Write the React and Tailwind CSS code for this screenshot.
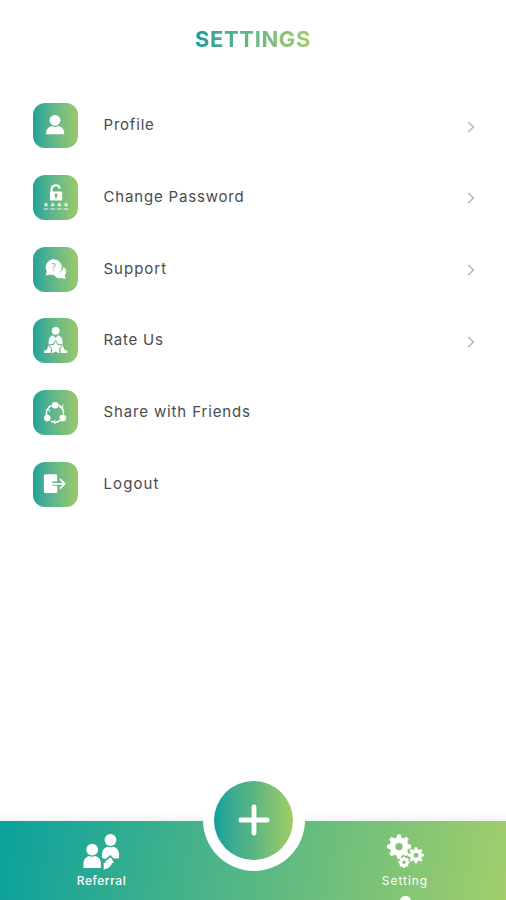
import React from "react";

const gearPath = (cx, cy, outer, inner, teeth, hole) => {
  const points = [];
  const step = (Math.PI * 2) / teeth;
  for (let i = 0; i < teeth; i++) {
    const a = i * step - Math.PI / 2;
    [[-0.34, inner], [-0.18, outer], [0.18, outer], [0.34, inner]].forEach(([f, r]) => {
      points.push(`${(cx + r * Math.cos(a + f * step)).toFixed(2)} ${(cy + r * Math.sin(a + f * step)).toFixed(2)}`);
    });
  }
  return `M${points.join("L")}ZM${cx - hole} ${cy}a${hole} ${hole} 0 1 0 ${hole * 2} 0a${hole} ${hole} 0 1 0 ${-hole * 2} 0Z`;
};

const ProfileIcon = () => (
  <>
    <circle cx="22" cy="17.3" r="5.4" />
    <path d="M13.2 31.2v-1.4c0-4 3.2-6.2 6-6.7 1.8 1.2 4.2 1.2 6 0 2.8.5 6 2.7 6 6.7v1.4Z" />
  </>
);

const PasswordIcon = () => (
  <>
    <path d="M18.6 17v-2.5a4.2 4.2 0 0 1 8-1.8" fill="none" stroke="white" strokeWidth="2.1" strokeLinecap="round" />
    <path fillRule="evenodd" d="M18 16.5h10.2a1 1 0 0 1 1 1v7a1 1 0 0 1-1 1H18a1 1 0 0 1-1-1v-7a1 1 0 0 1 1-1Zm5 2a1.5 1.5 0 0 0-.7 2.8v2.2h1.5v-2.2a1.5 1.5 0 0 0-.8-2.8Z" />
    {[13, 19.7, 26.4, 33.1].map((x) => (
      <g key={x} opacity="0.75">
        <path d={`M${x} 27.8v3.8M${x - 1.7} 28.7l3.4 2M${x + 1.7} 28.7l-3.4 2`} stroke="white" strokeWidth="1.2" />
        <path d={`M${x - 2.4} 34h4.8`} stroke="white" strokeWidth="1.2" />
      </g>
    ))}
  </>
);

const SupportIcon = () => (
  <>
    <path d="M30.3 20.1c2.1 1.2 3.2 3.2 2.7 5.6-.2.9-.6 1.7-1.2 2.5l.7 4.1-3.8-1.3c-3.4.7-6.4-.5-7.6-2.9 4.7-.7 8.4-3.2 9.2-8Z" />
    <path d="M20.5 12.3a8 8 0 1 1-2.9 15.3L12.8 28.5l1-4.2a8 8 0 0 1 6.7-12Z" />
    <text x="20.5" y="23.5" textAnchor="middle" fontSize="10" fontWeight="600" fill="#7cc9a8" fontFamily="Open Sans, sans-serif">?</text>
  </>
);

const RateIcon = () => (
  <>
    <circle cx="22.7" cy="12.8" r="3.9" />
    <path d="M20.1 17.2 22.6 20l2.5-2.8c2.7.7 4.1 2.7 4.3 5.8l.2 3.4-4.4-.6-2.6-4.1-2.6 4.1-4.4.6.1-3.4c.2-3.1 1.8-5.1 4.4-5.8Z" />
    <path d="m22.6 23 1.9 4 4.6.5-3.2 3.2.7 4.9-4-2.2-4 2.2.7-4.9-3.2-3.2 4.6-.5Z" />
    <path d="M15.4 27.6 18 30.7l-.5 4.3h-5.2c-1.9 0-1.8-2.2 0-2.8l1.6-.5ZM29.9 27.6l-2.6 3.1.5 4.3H33c1.9 0 1.8-2.2 0-2.8l-1.6-.5Z" />
  </>
);

const ShareIcon = () => (
  <>
    <path d="M13.7 25.5a8.8 8.8 0 0 1 4.6-10M24.7 14.8a8.8 8.8 0 0 1 5.7 9.8M27.2 30.7a8.8 8.8 0 0 1-9.3.3" fill="none" stroke="white" strokeWidth="1.5" />
    <circle cx="22" cy="15.2" r="3.3" />
    <circle cx="14.3" cy="28.1" r="3.3" />
    <circle cx="29.8" cy="28.1" r="3.3" />
    <path d="M12.8 20.5l3-1.6.9 3.1M26.5 17.7l3.2-.2.1-3M22.5 29.7l-2 2.3 2.3 2" fill="none" stroke="white" strokeWidth="1" />
  </>
);

const LogoutIcon = () => (
  <>
    <path d="M12.4 12.2h10.3a1.5 1.5 0 0 1 1.5 1.5v5.8h-5v4.3h5v5.7a1.5 1.5 0 0 1-1.5 1.5H12.4a1.5 1.5 0 0 1-1.5-1.5V13.7a1.5 1.5 0 0 1 1.5-1.5Z" />
    <path d="M18.8 21.8h12.5M27 17l4.6 4.8-4.6 4.8" fill="none" stroke="white" strokeWidth="1.8" />
  </>
);

const items = [
  { label: "Profile", Icon: ProfileIcon, arrow: true, tracking: "tracking-[0.8px]" },
  { label: "Change Password", Icon: PasswordIcon, arrow: true, tracking: "tracking-[0.82px]" },
  { label: "Support", Icon: SupportIcon, arrow: true, tracking: "tracking-[1px]" },
  { label: "Rate Us", Icon: RateIcon, arrow: true, tracking: "tracking-[0.75px]" },
  { label: "Share with Friends", Icon: ShareIcon, arrow: false, tracking: "tracking-[0.86px]" },
  { label: "Logout", Icon: LogoutIcon, arrow: false, tracking: "tracking-[1.1px]" },
];

function SettingRow({ label, Icon, arrow, tracking }) {
  return (
    <li className="flex h-[45px] items-center">
      <span className="h-[45px] w-[45px] shrink-0 rounded-[12px] bg-linear-to-r from-[#16a49b] to-[#9aca69]">
        <svg width="45" height="45" viewBox="0 0 45 45" fill="white">
          <Icon />
        </svg>
      </span>
      <span className={`ml-[25.5px] flex-1 pb-[1px] text-[15px] leading-5 whitespace-nowrap text-[#4b4b4b] ${tracking}`}>{label}</span>
      {arrow && (
        <svg className="mt-[2px] mr-[1px]" width="8" height="12" viewBox="0 0 8 12" fill="none" stroke="#b8b8b8" strokeWidth="1.5">
          <path d="m1.2 1 5.2 5-5.2 5" />
        </svg>
      )}
    </li>
  );
}

export default function App() {
  return (
    <div className="flex h-[900px] w-[506px] flex-col overflow-hidden bg-white font-['Inter','Liberation_Sans',sans-serif]">
      <header className="flex h-[103px] shrink-0 justify-center pt-[24px]">
        <h1 className="h-[30px] bg-linear-to-r from-[#0c9f98] to-[#a2cc69] bg-clip-text text-[22px] leading-[30px] font-bold tracking-[0.6px] text-transparent">SETTINGS</h1>
      </header>
      <ul className="flex flex-1 flex-col gap-[26.8px] pr-[30px] pl-[33px]">
        {items.map((item) => (
          <SettingRow key={item.label} {...item} />
        ))}
      </ul>
      <div className="h-[9px] shrink-0 bg-linear-to-b from-white to-[#f2f4f5]" />
      <nav className="relative flex h-[79px] shrink-0 bg-linear-[100deg] from-[#0ba19d] to-[#a2ce6b]">
        <div className="flex w-[203px] flex-col items-center pt-[13px]">
          <svg className="-ml-[4px]" width="40" height="38" viewBox="0 0 40 38" fill="white">
            <circle cx="12.2" cy="15.7" r="5.9" />
            <path d="M3.5 34v-4.5c0-4.2 3-7 6-7.4 1.7.8 3.7.8 5.4 0 3 .4 6 3.2 6 7.4v3.2c0 .8-.5 1.3-1.3 1.3Z" />
            <circle cx="30.5" cy="6" r="5.9" />
            <path d="M22 24v-4c0-4.3 2.8-6.8 5.8-7.3 1.7.8 3.7.8 5.4 0 3 .5 5.8 3 5.8 7.3v3.5c0 .6-.5 1-1 1h-4.2L30.3 21l-4.6 4Z" />
            <path d="m25.2 27.3 5.7-4 3.2 5.8-2.2-.2c-.6 3.3-3.4 5.6-8.2 6.5v-6.7l3-.1Z" />
          </svg>
          <span className="mt-px text-[12px] leading-4 font-medium tracking-[0.55px] text-white">Referral</span>
        </div>
        <div className="ml-[101px] flex w-[202px] flex-col items-center pt-[12px]">
          <svg width="38" height="38" viewBox="0 0 38 38" fill="white" fillRule="evenodd">
            <path d={gearPath(13, 13.6, 12.2, 9.4, 8, 3.7)} />
            <path d={gearPath(30, 22.2, 8.1, 6.1, 8, 2.5)} />
            <path d={gearPath(18, 29.3, 5.7, 4.7, 8, 1.8)} />
          </svg>
          <span className="mt-[2px] text-[12px] leading-4 tracking-[0.95px] text-white">Setting</span>
        </div>
        <div className="absolute -top-[52px] left-[202.5px] flex h-[102px] w-[102px] items-center justify-center rounded-full bg-white">
          <button className="flex h-[79px] w-[79px] items-center justify-center rounded-full bg-linear-to-r from-[#0ca29e] via-[#58b580] to-[#a0cd65]" aria-label="Add">
            <svg width="32" height="32" viewBox="0 0 32 32" stroke="white" strokeWidth="4.8" strokeLinecap="round">
              <path d="M16 2.8v26.4M2.8 16h26.4" />
            </svg>
          </button>
        </div>
        <span className="absolute top-[75px] left-[400px] h-[10px] w-[11px] rounded-full bg-white" />
      </nav>
    </div>
  );
}
